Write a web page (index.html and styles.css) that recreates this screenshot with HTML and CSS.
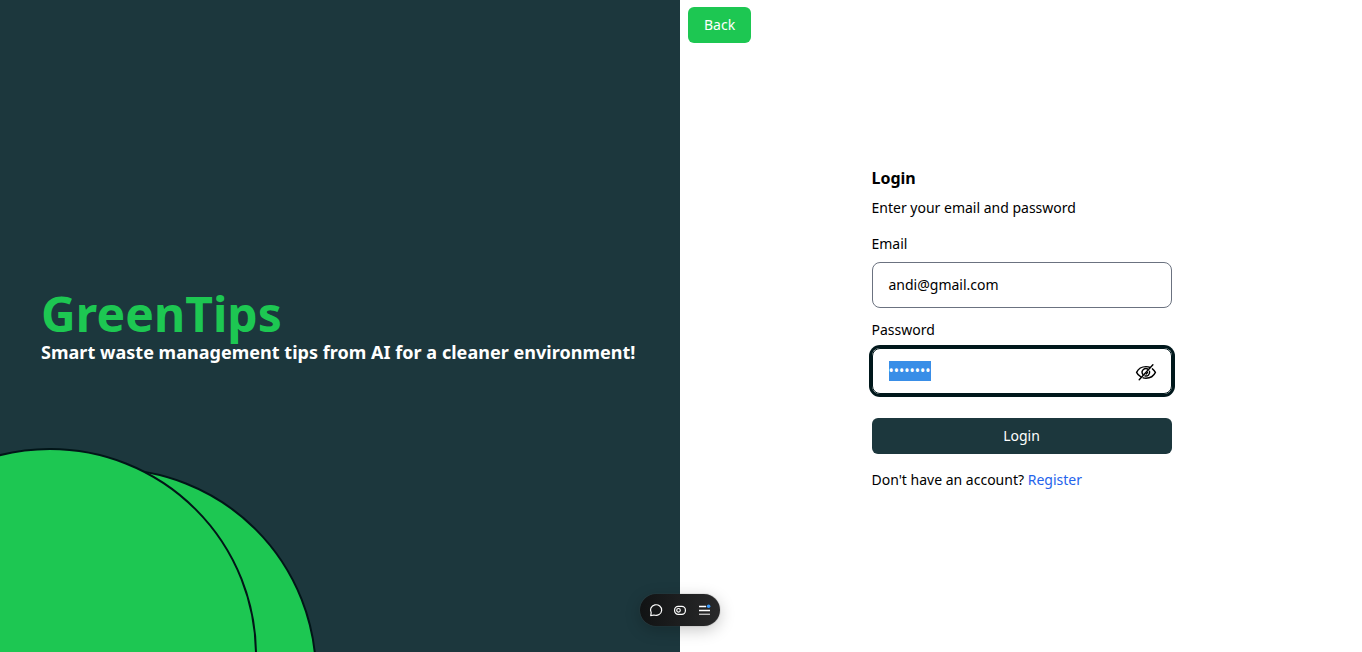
FILE: index.html
```
<!DOCTYPE html>
<html lang="en">
<head>
<meta charset="utf-8">
<title>GreenTips - Login</title>
<link rel="stylesheet" href="styles.css">
</head>
<body>
<main class="page">
  <section class="hero">
    <svg class="circles" width="330" height="210" viewBox="0 442 330 210">
      <circle cx="110" cy="675" r="206"/>
      <circle cx="50" cy="655" r="206"/>
    </svg>
    <h1 class="brand">GreenTips</h1>
    <p class="tagline">Smart waste management tips from AI for a cleaner environment!</p>
  </section>
  <section class="panel">
    <a class="back">Back</a>
    <form class="form">
      <h2 class="title">Login</h2>
      <p class="subtitle">Enter your email and password</p>
      <label class="label">Email</label>
      <div class="field">andi@gmail.com</div>
      <label class="label label-password">Password</label>
      <div class="field field-focus">
        <span class="selected">••••••••</span>
        <svg class="eye" width="22" height="20" viewBox="0 0 22 20" fill="none" stroke="#000" stroke-width="1.4" stroke-linecap="round">
          <path d="M15.2 5.5C13.9 4.9 12.5 4.6 11 4.6c-4.3 0-7.8 2.4-9.4 5.8.8 1.8 2.3 3.4 4.3 4.5"/>
          <path d="M17.4 6.8c1.3.9 2.3 2.200 3 3.600-1.600 3.400-5.100 5.800-9.400 5.800-1 0-2-.1-2.900-.4"/>
          <path d="M13.300 7.500a3.700 3.700 0 0 0-5.400 5M14.500 9.300a3.700 3.700 0 0 1-4.600 4.600M12.500 10.600l-1.300 1.300"/>
          <path d="M17.900 2.800L4.200 17.700"/>
        </svg>
      </div>
      <button class="submit" type="button">Login</button>
      <p class="register">Don't have an account? <a class="link">Register</a></p>
    </form>
  </section>
</main>
<div class="toolbar">
  <svg class="tool" width="16" height="16" viewBox="0 0 16 16" fill="none" stroke="#fff" stroke-width="1.2">
    <path d="M2.700 13.600l.5-2.900A5.600 5.300 0 1 1 6 13z" stroke-linejoin="round"/>
  </svg>
  <svg class="tool" width="16" height="16" viewBox="0 0 16 16" fill="none" stroke="#fff" stroke-width="1.2">
    <rect x="2.600" y="4.300" width="10.800" height="8" rx="3.600"/><circle cx="6.500" cy="8.300" r="1.800"/>
  </svg>
  <svg class="tool" width="16" height="16" viewBox="0 0 16 16" fill="none">
    <path d="M3 4.500h7M3 8.500h11" stroke="#fff" stroke-width="1.300"/><path d="M3 12.300h11" stroke="#bbb" stroke-width="1.400"/><circle cx="12.600" cy="4.300" r="1.800" fill="#3b9cff"/>
  </svg>
</div>
</body>
</html>
```
FILE: styles.css
```
* { box-sizing: border-box; }
body, h1, h2, p { margin: 0; }
body {
  font: 14px/20px "Noto Sans", sans-serif;
  color: #000;
  background: #fff;
  overflow: hidden;
}
.page { display: grid; grid-template-columns: 680px 1fr; height: 652px; }
.hero {
  position: relative;
  display: flex;
  flex-direction: column;
  justify-content: center;
  padding: 4px 0 0 41px;
  background: #1c373d;
}
.circles { position: absolute; left: 0; bottom: 0; fill: #1dc752; stroke: #021518; stroke-width: 2; }
.brand { font-size: 48px; line-height: 48px; font-weight: 700; letter-spacing: .08px; color: #1dc752; }
.tagline { font-size: 18px; line-height: 28px; font-weight: 700; letter-spacing: .03px; color: #fff; white-space: nowrap; }
.panel { display: flex; flex-direction: column; align-items: flex-start; padding: 7px 8px; }
.back {
  padding: 8px 16px;
  height: 36px;
  border-radius: 6px;
  background: #1dc752;
  color: #fff;
}
.form { display: flex; flex-direction: column; width: 300px; margin: 123px 0 0 183.5px; }
.title { font-size: 16px; line-height: 24px; font-weight: 700; }
.subtitle { margin: 8px 0 16px; }
.label { margin-bottom: 8px; }
.label-password { margin-top: 12px; }
.field {
  display: flex;
  align-items: center;
  justify-content: space-between;
  height: 46px;
  padding: 0 14px 0 16px;
  border: 1px solid #6b7280;
  border-radius: 8px;
}
.field-focus { box-shadow: 0 0 0 3px #00171b; border-color: #00171b; }
.selected { height: 20px; background: #398ee7; color: #fff; }
.eye { position: relative; top: 1px; }
.submit {
  height: 36px;
  margin: 24px 0 16px;
  border: 0;
  border-radius: 6px;
  background: #1c373d;
  color: #fff;
  font: inherit;
}
.link { color: #2563eb; }
.toolbar {
  position: fixed;
  left: 640px;
  top: 594px;
  display: flex;
  align-items: center;
  justify-content: center;
  gap: 8px;
  width: 80px;
  height: 32px;
  border-radius: 16px;
  background: linear-gradient(90deg, #111314, #29292a);
  box-shadow: 0 0 1px #555, 0 4px 16px rgba(0, 0, 0, .22);
}
```
